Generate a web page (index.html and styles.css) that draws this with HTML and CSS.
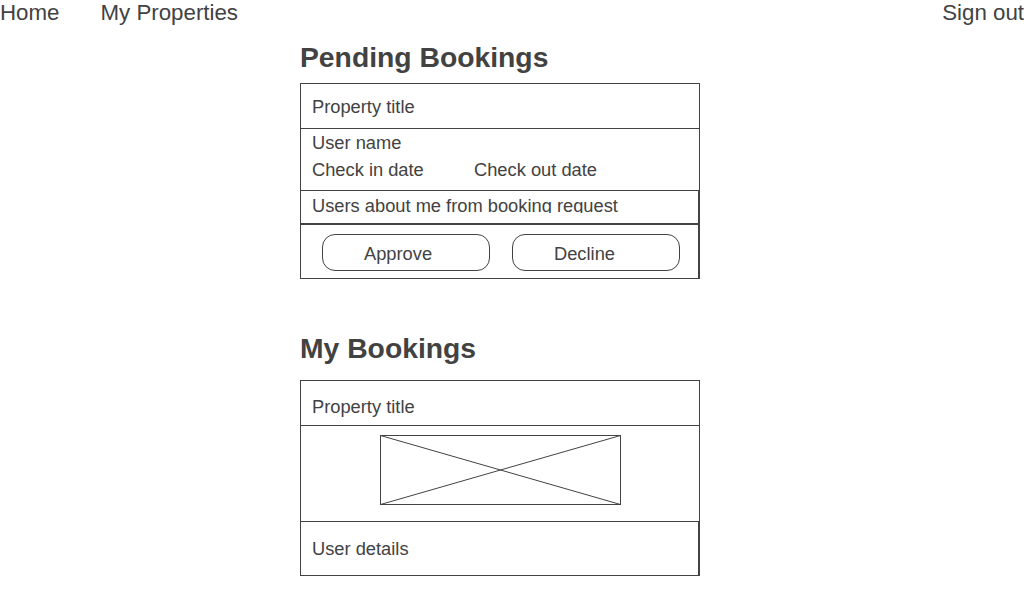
FILE: index.html
```html
<!DOCTYPE html>
<html lang="en">
<head>
<meta charset="utf-8">
<title>Bookings</title>
<link rel="stylesheet" href="styles.css">
</head>
<body>
<nav class="topnav">
  <a class="nav-link" href="#">Home</a>
  <a class="nav-link" href="#">My Properties</a>
  <a class="nav-link push" href="#">Sign out</a>
</nav>
<main class="content">
  <h2 class="section-title first">Pending Bookings</h2>
  <div class="card">
    <div class="row row-title">Property title</div>
    <div class="row row-info">
      <div class="line">User name</div>
      <div class="line dates"><span>Check in date</span><span>Check out date</span></div>
    </div>
    <div class="row row-about"><div class="clip">Users about me from booking request</div></div>
    <div class="row row-actions">
      <button class="btn" type="button">Approve</button>
      <button class="btn" type="button">Decline</button>
    </div>
  </div>

  <h2 class="section-title second">My Bookings</h2>
  <div class="card">
    <div class="row row-title tall">Property title</div>
    <div class="row row-image">
      <svg class="placeholder" width="241" height="70" viewBox="0 0 241 70" aria-hidden="true">
        <rect x="0.5" y="0.5" width="240" height="69" fill="none" stroke="#424242" stroke-width="1"/>
        <line x1="0.5" y1="0.5" x2="240.5" y2="69.5" stroke="#424242" stroke-width="1"/>
        <line x1="0.5" y1="69.5" x2="240.5" y2="0.5" stroke="#424242" stroke-width="1"/>
      </svg>
    </div>
    <div class="row row-user">User details</div>
  </div>
</main>
</body>
</html>
```
FILE: styles.css
```css
* {
  box-sizing: border-box;
}

body {
  margin: 0;
  font-family: "Liberation Sans", Arial, sans-serif;
  color: #424242;
  background: #ffffff;
}

.topnav {
  display: flex;
  gap: 41px;
  height: 25px;
  font-size: 22.3px;
  line-height: 25px;
}

.nav-link {
  color: inherit;
  text-decoration: none;
}

.push {
  margin-left: auto;
}

.content {
  width: 400px;
  margin-left: 300px;
}

.section-title {
  margin: 0;
  font-size: 28.3px;
  line-height: 32px;
  font-weight: bold;
}

.first {
  margin-top: 16px;
  margin-bottom: 10px;
}

.second {
  margin-top: 53px;
  margin-bottom: 16px;
}

.card {
  font-size: 18.3px;
  line-height: 21px;
}

.row {
  border: 1px solid #424242;
  padding-left: 11px;
}

.row + .row {
  margin-top: -1px;
}

.row-title {
  height: 46px;
  padding-top: 12px;
}

.row-title.tall {
  padding-top: 15px;
}

.row-info {
  height: 63px;
  padding-top: 3px;
  display: flex;
  flex-direction: column;
  gap: 6px;
}

.dates {
  display: grid;
  grid-template-columns: 162px auto;
}

.row-about {
  height: 35px;
  border-right-width: 2px;
  border-bottom-width: 2px;
}

.clip {
  height: 22px;
  padding-top: 3.5px;
  overflow: hidden;
  white-space: nowrap;
}

.row + .row-actions {
  margin-top: 0;
}

.row-actions {
  height: 54px;
  border-top: 0;
  border-right-width: 2px;
  padding: 9px 0 0 21px;
  display: flex;
  gap: 22px;
  align-items: flex-start;
}

.btn {
  width: 168px;
  height: 37px;
  border: 1px solid #424242;
  border-radius: 13px;
  background: #ffffff;
  color: inherit;
  font: inherit;
  text-align: left;
  padding: 2px 0 0 41px;
}

.row-image {
  height: 97px;
  padding: 9px 0 0 79px;
}

.placeholder {
  display: block;
}

.row-user {
  height: 55px;
  padding-top: 16px;
  border-right-width: 2px;
}
```
